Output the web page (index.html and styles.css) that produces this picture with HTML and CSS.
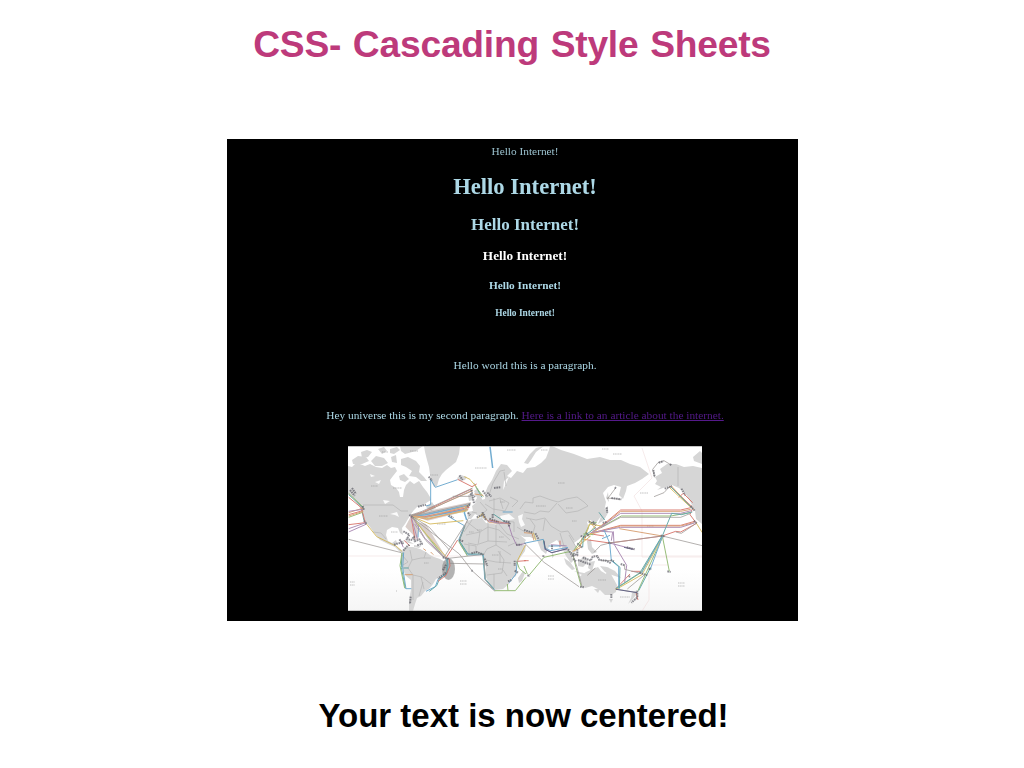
FILE: index.html
```html
<!DOCTYPE html>
<html lang="en">
<head>
<meta charset="utf-8">
<title>CSS- Cascading Style Sheets</title>
<link rel="stylesheet" href="styles.css">
</head>
<body>
<main class="slide">
<h1 class="title">CSS- Cascading Style Sheets</h1>
<section class="demo">
<div class="line plain">Hello Internet!</div>
<h1 class="line h1">Hello Internet!</h1>
<h2 class="line h2">Hello Internet!</h2>
<h3 class="line h3">Hello Internet!</h3>
<h4 class="line h4">Hello Internet!</h4>
<h5 class="line h5">Hello Internet!</h5>
<p class="line p1">Hello world this is a paragraph.</p>
<p class="line p2">Hey universe this is my second paragraph. <a class="link" href="#">Here is a link to an article about the internet.</a></p>
<svg class="map" viewBox="348 446 354 165" role="img" aria-label="World map of submarine cables">
<defs><linearGradient id="sea" x1="0" y1="0" x2="0" y2="1"><stop offset=".75" stop-color="#fff"/><stop offset="1" stop-color="#f5f5f5"/></linearGradient></defs>
<rect x="348" y="446" width="354" height="165" fill="url(#sea)"/>
<g class="soft">
<g class="faint"><path d="M348 556H702M642 448L652 478 634 496 642 511V557H702M644 565H668M649 559V600L642 611"/></g>
<g class="land">
<path d="M348 466L352 467 355 464 360 464 365 466 370 464 376 467 382 468 387 465 391 468 395 467 397 471 393 476 390 480 391 485 396 488 399 492 400 497 403 497 404 490 406 485 410 481 414 484 419 481 423 487 427 492 430 497 431 500 426 503 421 506 417 507 414 510 411 514 408 519 405 524 402 528 403 535 400 533 398 528 392 527 387 530 386 535 388 541 392 543 396 540 397 543 395 546 400 549 403 552 400 552 395 547 388 544 380 540 375 534 370 527 366 522 363 515 361 509 356 502 353 498 348 494Z"/>
<path d="M352 460L358 456 366 457 369 461 362 464 353 464ZM361 452L367 450 372 452 368 457 362 458ZM371 461L376 456 384 458 388 463 382 466 375 466ZM378 449L384 447 387 451 382 454ZM390 449L397 447 400 450 394 454 390 453ZM391 457L396 455 397 463 392 462ZM400 446L423 446 416 451 405 454 401 451ZM401 459L408 457 416 461 420 466 419 472 424 477 427 481 421 481 416 477 409 476 412 471 406 467 401 465ZM399 476L404 474 409 479 405 482 400 480ZM426 507L432 502 436 508 431 511ZM402 540L409 541 414 544 408 543ZM414 545L421 546 419 548 414 547Z"/>
<path d="M424 446H460L459 454 456 462 451 466 446 470 442 474 439 479 437 486 434 487 431 481 430 474 429 467 427 460 425 452ZM457 478L461 475 467 477 465 480 460 481Z"/>
<path d="M402 551L406 547 413 547 420 549 426 552 430 555 434 557 440 559 447 563 448 566 445 571 442 576 436 579 433 584 429 589 425 591 421 596 417 598 415 604 413 611 409 611 409 600 411 590 411 580 406 576 402 568 401 561Z"/>
<path d="M468 521L472 519 482 518 486 523 493 524 500 525 505 525 508 531 512 538 517 545 526 545 525 551 520 558 517 564 517 570 516 576 511 579 509 584 503 589 494 590 489 584 485 575 486 567 483 561 484 555 478 553 469 555 464 551 460 545 459 541 462 532Z"/>
<path d="M518 578L523 571 525 573 522 581 519 583Z"/>
<path d="M485 493L488 486 492 480 496 471 501 464 507 465 512 471 507 476 511 478 517 471 523 473 527 468 535 467 541 463 546 458 549 450 550 446H552L561 450 574 454 587 459 600 457 610 460 621 460 630 464 640 467 649 474 642 479 635 483 627 486 626 491 623 499 619 495 621 487 614 485 608 487 603 493 606 502 604 512 599 519 596 523 590 520 587 522 589 529 584 535 578 540 574 543 577 548 575 553 570 550 568 551 574 560 571 563 566 556 561 546 557 540 550 544 546 554 541 550 537 540 530 537 524 537 520 535 526 540 523 545 511 551 505 541 498 530 496 524 487 521 480 517 475 514 471 519 468 519 467 512 473 511 472 506 478 501 485 499 485 496 489 494Z"/>
<path d="M474 491L478 488 480 495 483 501 474 503 477 498ZM468 495L472 494 473 500 469 501ZM524 463L530 454 536 448 544 446 536 452 531 460 528 464ZM552 552L554 556 552 558ZM603 510L608 506 608 513 604 520 598 524 600 519ZM606 498L608 492 609 502Z"/>
<path d="M702 468L693 466 684 467 676 464 667 464 660 469 662 473 655 477 657 481 655 484 661 487 657 490 666 487 672 485 679 488 685 493 690 501 695 511 696 519 702 524ZM693 457L700 451 702 453V464L694 461Z"/>
<path d="M564 558L570 562 575 569 572 570 566 564ZM578 561L585 556 588 562 583 567 578 566ZM574 571L589 574 584 576ZM589 562L595 561 592 571 588 568ZM587 541L591 539 592 547 597 552 592 554 588 549ZM600 566L607 567 615 571 621 578 612 575 605 572Z"/>
<path d="M582 586L579 577 586 572 593 569 598 567 601 571 606 574 608 567 612 576 617 585 616 592 611 595 605 595 600 590 592 586 585 588ZM594 589L600 589 598 593ZM609 599L613 599 611 603ZM632 593L637 590 636 595 632 600 628 604 631 598Z"/>
</g>
<g class="water"><path d="M383 500l7 1-5 3zM518 516l5-2-1 5 3 6-4 2-2-5zM500 516l9-2 6 5-13 2zM370 474l5 2-4 1zM375 482l6-2-2 4zM390 514l7-2 2 5-4-2zM504 481l5-4-3 7-3 6z"/></g>
<g class="borders">
<path d="M363 505H393L401 511 408 511M373 532L381 533 386 539M402 555L408 562 403 565M410 550L412 560 421 558 431 558M412 560L408 568 413 575 422 577 431 584M413 575V600M421 577L424 589M424 558L426 552M419 596L423 582"/>
<path d="M467 522L480 532 488 527 499 530M466 535L480 532 478 545 468 543M488 521V541L479 544M496 525V545L487 549 484 554M488 541L507 542M499 530L510 540M496 545L511 555M486 560L496 562 511 563M498 551L504 560 502 573 487 575M494 574V588M503 570L507 576M500 551V563M472 520L464 532M464 544L476 546V553M469 545V554"/>
<path d="M489 495L493 483 500 471 505 470M504 472L506 486M489 501L500 498 509 503 505 511 493 509 485 504M480 502L487 510 482 514M494 498V513M500 499L503 509M510 497L518 501 512 507M472 512L477 513"/>
<path d="M520 509L525 502 533 503 533 498 540 496 551 500 558 502 566 499 577 497 584 502 588 506 578 511 566 513 558 504M524 512L535 514 540 511 549 512 557 503M526 518L536 520 545 518 551 526 561 532 568 531 574 540M530 519L535 526 532 536M545 519L543 531M517 527L525 532M560 533L564 546M569 535L576 547M505 521L514 522 514 532M499 524L507 534 519 539M508 546L517 542M678 467V486"/>
</g>
<g class="labels"><path d="M371 486h7M393 488h9M379 516h9M382 452h6M410 451h8M430 475h8M475 468h12M507 450h9M541 450h7M558 483h7M536 506h10M566 508h7M572 521h5M613 454h9M602 449h7M640 493h8M500 502h5M469 532h5M477 530h5M499 537h5M492 555h7M498 569h5M424 563h5M437 524h9M598 580h8M620 597h10M391 532h7M396 591h1"/>
<path d="M350 582h5m-5 3h5M460 581h7m-7 3h7M548 576h6m-6 3h6M678 583h7m-7 3h7M647 526h7"/></g>
<ellipse class="rings" cx="448.5" cy="569" rx="6.5" ry="11"/>
<g class="cables" transform="translate(346 444) scale(.33333)">
<path class="haze" d="M195 216L212 222 218 290 178 248ZM195 213L240 202 375 174 366 200 245 230ZM210 234L240 240 300 340 262 308Z"/>
<path class="blue thick" d="M432 8L440 72M196 217L238 212 372 183M196 219L242 218 362 196M360 190L355 206 362 228"/>
<path class="blue" d="M254 106V182L240 186M254 106L268 130 335 107M305 216L355 245 338 288 364 333 412 332 416 405 446 439M173 325L170 370 180 434H196M470 204H500M218 240L216 280M490 416L510 390 514 350M300 345L306 360 304 386 276 406 268 428 240 442"/>
<path class="teal" d="M8 152L54 194M168 326L166 370 178 434M172 372H188M357 245L340 290 366 330 410 330 418 405 445 436M304 345L302 388 280 406 272 425 250 442M384 118L408 160M46 192L54 230M442 210L486 240"/>
<path class="red" d="M8 160L52 196M8 242L58 236 46 192M196 215L230 204 378 134M335 106L378 128 392 120M300 342L335 288M310 345L312 366 300 394 276 412M514 352L540 350M195 216L207 286M8 212L50 200M196 216L236 218 370 190M430 228L490 240M175 290L192 306"/>
<path class="green" d="M8 148L52 190M168 326L162 365 176 432M338 292L364 336M445 440H508L540 400M484 420L486 440M512 352L520 374 540 390M196 214L294 340M390 130L412 158M8 220L50 205"/>
<path class="gold" d="M60 238L92 278 150 306 168 322M355 98L372 106 392 130M195 216L252 240 352 230M197 220L300 338M395 222L410 208 414 222M514 350L538 304M366 182L350 205M196 215L242 224 364 200"/>
<path class="orange" d="M8 206L52 192M8 216L52 202M195 214L240 220 370 184M195 216L244 226 366 196M176 392H200M196 216L225 208 380 140M410 212L430 236 490 238M232 314L240 320M254 324L262 332M385 150L412 154"/>
<path class="purple" d="M8 202L50 196M8 254L60 236M8 264L62 240M195 216L214 285M200 220L236 282 296 340M425 230L460 238 490 236M488 242L498 274 512 304 540 298M172 310L162 288"/>
<path class="gray" d="M8 286L166 326M195 213L228 202 380 132M196 214L232 206 380 138M195 216L240 208 374 178M198 220L340 330 378 380 440 436M294 340L366 228M298 344L415 331M312 358L415 360M200 218L250 250 310 318M296 343L240 290 206 240M414 340L418 408 446 442M366 224L340 286M320 157H374"/>
<path class="hubs" d="M18 132L30 150M12 138L26 156M50 186L54 198M54 230L62 240M190 212L202 222M216 188L240 182M376 138L384 178M372 150L388 158M372 180L362 190M366 206L372 214M410 140L424 158M424 146L436 158M444 132L464 130M392 220L414 212 420 230M430 224L458 234M472 230L492 236 488 248M172 262L190 272 182 286 196 288 204 278 206 292 220 286 228 300 212 304M144 302L172 294M160 286L172 300M172 320L180 310 190 302M290 340L308 344M300 362L290 380M300 386L276 404M340 288L352 292M376 328L392 324 412 332M416 344L424 366M506 350V366M506 380L516 386M486 412L496 408M194 458L192 480M248 98L258 110M340 94L350 108M376 380H380M510 302H526M308 214L322 222M410 204V214M440 210V222"/>
</g>
<g class="cables" transform="translate(524 444) scale(.33333)">
<path class="red" d="M235 244L290 198H470L505 190M200 268L290 244H470L512 232M172 285L257 297 415 276 455 262 470 264 518 238M438 126L506 190M464 160L478 148 506 176M506 192L498 212 516 236M275 435L318 390M322 382H352M108 290V310M0 350H14M336 445L342 468M202 270L240 276"/>
<path class="orange" d="M230 250L290 202H470L500 196M195 272L290 246H470L510 236M190 275L245 235M442 126L510 198M145 322L168 312 174 284 235 248M0 266L24 268 30 290M202 240L218 256M286 254L415 276"/>
<path class="green" d="M235 248L292 216H440L498 206M15 394L60 340 140 322M415 276L436 382M415 276L352 385 275 435M417 276L342 440M146 328L156 370 172 428M150 318L178 280 200 236 218 236M178 270L208 272M0 366L10 390"/>
<path class="gold" d="M198 272L232 246 196 240 180 290 150 322M417 276L354 392 275 437M436 130L500 190M516 236L535 266M28 266L36 290M170 300L200 276M194 230L215 244 200 262"/>
<path class="purple" d="M235 246L290 208H470L502 200M200 266L290 250H470L514 236M268 262L270 300 308 364 302 415M257 297L330 316M80 302L128 306M232 262L266 264 262 290M60 314L82 326 130 314M206 262L244 240"/>
<path class="blue" d="M240 258L257 297 262 350 284 368V434M0 298L58 286 62 312 80 320 132 310M416 276L378 378M415 276L352 388M258 274L234 284M74 306H110"/>
<path class="teal" d="M415 276L443 208 472 212 505 204M225 205L242 228M414 276L348 386 276 433M265 350L288 370 286 434M344 440L380 370M440 128L506 194M176 310L178 278 216 250M58 288L64 314"/>
<path class="gray" d="M230 252L290 220H470L500 208M0 296L60 355 165 428M145 330L158 366 174 428M275 435L340 446M310 435L362 392M415 276L535 305M210 325L230 304 257 297 415 276M455 264L472 268 514 240M250 165L275 132M250 162L290 166M190 394L214 372M232 350L262 350M392 100L386 76 402 56 420 50 440 62M390 158L420 146 436 128M302 362V376L350 388"/>
<path class="navy" d="M276 436L340 446M60 290L64 316 84 326 130 314M300 310L326 316"/>
<path class="hubs" d="M272 130L278 134M262 162L292 166M248 190L250 206M422 134L444 126M472 134L484 154M500 186L512 200M510 230L518 238M410 274L422 278M252 296L262 298M308 310L332 316M290 360L302 364M314 396L320 400M346 386L370 394M374 374L382 376M430 382L440 384M262 450V464M340 440V460L322 476M132 316L146 338 154 330M140 326L160 334 160 316M148 344L156 352M162 348L200 362M176 340L200 350 206 338 220 336 226 348 246 350 262 358M194 232L210 240M206 232L216 244M236 236L248 234M170 276L186 280M186 266L196 278M160 298L176 312M0 258L26 266M34 268L44 286M84 304V316M58 334V340M10 394L18 396M168 428L180 430M388 78L392 98M404 56L418 52M438 60L442 64M260 348L270 352"/>
</g>
</g>
<path class="frame" d="M348 446.5H702M348 610.5H702"/>
</svg>
</section>
<p class="caption">Your text is now centered!</p>
</main>
</body>
</html>
```
FILE: styles.css
```css
* { box-sizing: border-box; }
body { margin: 0; background: #fff; }
.slide { width: 1024px; height: 768px; display: flex; flex-direction: column; align-items: center; overflow: hidden; }
.title { margin: 22px 0 0; color: #bd3a7b; font: bold 37.2px/44px "Liberation Sans", Arial, sans-serif; letter-spacing: -.22px; word-spacing: 1.6px; }
.demo { width: 571px; height: 482px; flex-shrink: 0; margin-top: 73px; padding: 2px 0 0 26px; background: #000; color: #add8e6; display: flex; flex-direction: column; align-items: center; font-family: "Liberation Serif", "Times New Roman", serif; }
.line { margin: 0; line-height: 20px; font-size: 11.35px; white-space: nowrap; filter: blur(.25px); }
.plain { opacity: .9; }
.h1 { margin-top: 12.5px; font-size: 22.6px; line-height: 26px; }
.h2 { margin-top: 15px; font-size: 17px; }
.h3 { margin-top: 11.5px; font-size: 13.25px; color: #fff; }
.h4 { margin-top: 9px; }
.h5 { margin-top: 8px; font-size: 9.4px; }
.p1 { margin-top: 32px; }
.p2 { margin-top: 29.5px; }
.link { color: #551a8b; text-decoration: underline; }
.map { display: block; width: 354px; height: 165px; margin-top: 21.5px; flex-shrink: 0; }
.soft { filter: blur(.45px); }
.map path { stroke-linejoin: round; }
.land { fill: #d6d6d6; }
.water { fill: #fbfbfb; }
.borders, .labels, .faint, .cables, .hubs, .frame { fill: none; }
.borders { stroke: #b0b0b0; stroke-width: .6; }
.faint { stroke: #f0dede; stroke-width: .6; }
.labels { stroke: #999; stroke-width: 1; stroke-dasharray: 1.2 .5; opacity: .6; }
.frame { stroke: #8a8a8a; stroke-width: 1; opacity: .5; }
.rings { fill: #9a9a9a; opacity: .75; }
.cables { stroke-width: 3; opacity: .85; }
.haze { fill: #a88f88; opacity: .5; }
.blue { stroke: #5b9fc9; }
.thick { stroke-width: 4.5; }
.red { stroke: #d4695f; }
.green { stroke: #86b262; }
.gold { stroke: #d3b552; }
.orange { stroke: #d49663; }
.purple { stroke: #a07baa; }
.gray { stroke: #8c8784; stroke-width: 2.3; }
.teal { stroke: #4f9c9c; }
.navy { stroke: #4b4b72; }
.hubs { stroke: #4b4b55; stroke-width: 6; stroke-dasharray: 5 2; opacity: .72; }
.caption { margin: 73px 0 0 23px; color: #000; font: bold 33px/44px "Liberation Sans", Arial, sans-serif; }
```
